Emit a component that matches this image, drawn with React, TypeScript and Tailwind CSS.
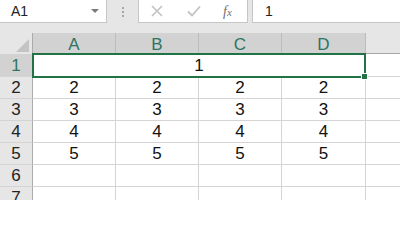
import React from "react";

const cols = ["A", "B", "C", "D"];
const widths = ["w-[83px]", "w-[83px]", "w-[83px]", "w-[84px]"];
const rows = [2, 3, 4, 5, 6, 7];

const font = { fontFamily: '"Liberation Sans", Arial, sans-serif' };

function Toolbar() {
  return (
    <div className="flex h-[33px] bg-[#e6e6e6] items-start">
      <div className="relative shrink-0 w-[107px] h-[23px] bg-white border-r border-b border-[#c6c6c6] flex items-center pl-[11px] text-[14px] text-[#222]">
        A1
        <span className="absolute right-[7px] top-[9px] w-0 h-0 border-l-[4px] border-r-[4px] border-t-[4px] border-l-transparent border-r-transparent border-t-[#7a7a7a]" />
      </div>
      <div className="shrink-0 w-[31px] h-[23px] flex flex-col items-center justify-center gap-[2px]">
        <span className="w-[2px] h-[2px] bg-[#a6a6a6]" />
        <span className="w-[2px] h-[2px] bg-[#a6a6a6]" />
        <span className="w-[2px] h-[2px] bg-[#a6a6a6]" />
      </div>
      <div className="shrink-0 w-[110px] h-[23px] bg-white border-l border-r border-b border-[#c6c6c6] flex items-center">
        <svg width="12" height="12" viewBox="0 0 12 12" className="ml-[12px]">
          <path d="M1 1 L11 11 M11 1 L1 11" stroke="#c2c2c2" strokeWidth="1.6" fill="none" />
        </svg>
        <svg width="14" height="12" viewBox="0 0 14 12" className="ml-[24px]">
          <path d="M1 6.5 L5 10.5 L13 1.5" stroke="#c2c2c2" strokeWidth="1.8" fill="none" />
        </svg>
        <span
          className="ml-[22px] text-[14px] italic text-[#6f6f6f]"
          style={{ fontFamily: '"Liberation Serif", "Times New Roman", serif' }}
        >
          f<span className="text-[11px]">x</span>
        </span>
      </div>
      <div className="shrink-0 w-[4px]" />
      <div className="flex-1 h-[23px] bg-white border-l border-b border-[#c6c6c6] flex items-center pl-[12px] text-[14px] text-[#222]">
        1
      </div>
    </div>
  );
}

function HeaderRow() {
  return (
    <div className="flex h-[21px] bg-[#e6e6e6]">
      <div className="relative shrink-0 w-[33px] h-full border-r border-[#ababab]">
        <span className="absolute right-[3px] bottom-[2px] w-0 h-0 border-l-[13px] border-b-[13px] border-l-transparent border-b-[#c4c4c4]" />
      </div>
      {cols.map((c, i) => (
        <div
          key={c}
          className={`${widths[i]} shrink-0 h-full bg-[#d2d2d2] border-r border-[#bcbcbc] flex items-center justify-center pt-[2px] text-[17px] text-[#2c7562]`}
        >
          {c}
        </div>
      ))}
      <div className="flex-1 h-full border-b border-[#a6a6a6]" />
    </div>
  );
}

function BodyRow({ n }: { n: number }) {
  const val = n <= 5 ? String(n) : "";
  return (
    <div className="flex h-[22px] bg-white">
      <div className="shrink-0 w-[33px] h-full bg-[#e6e6e6] border-r border-[#ababab] border-b border-b-[#d4d4d4] flex items-center justify-center text-[17px] text-[#222]">
        {n}
      </div>
      {cols.map((c, i) => (
        <div
          key={c}
          className={`${widths[i]} shrink-0 h-full border-r border-b border-[#d4d4d4] flex items-center justify-center text-[17px] text-[#111]`}
        >
          {val}
        </div>
      ))}
      <div className="shrink-0 w-[83px] h-full border-r border-b border-[#d4d4d4]" />
    </div>
  );
}

export default function App() {
  return (
    <div className="w-[400px] h-[200px] overflow-hidden bg-white" style={font}>
      <Toolbar />
      <HeaderRow />
      <div className="flex h-[23px] bg-white">
        <div className="shrink-0 w-[33px] h-full bg-[#d2d2d2] border-r border-[#ababab] border-b border-b-[#d4d4d4] flex items-center justify-center pt-[2px] text-[17px] text-[#2c7562]">
          1
        </div>
        <div className="relative shrink-0 w-[334px] -ml-[1px] h-[25px] -mt-[1px] border-2 border-[#217346] flex items-center justify-center text-[17px] text-[#111]">
          1
          <span className="absolute -right-[4px] -bottom-[4px] w-[7px] h-[7px] bg-[#217346] border border-white" />
        </div>
        <div className="shrink-0 w-[83px] h-full border-r border-b border-[#d4d4d4]" />
      </div>
      {rows.map((n) => (
        <BodyRow key={n} n={n} />
      ))}
    </div>
  );
}
